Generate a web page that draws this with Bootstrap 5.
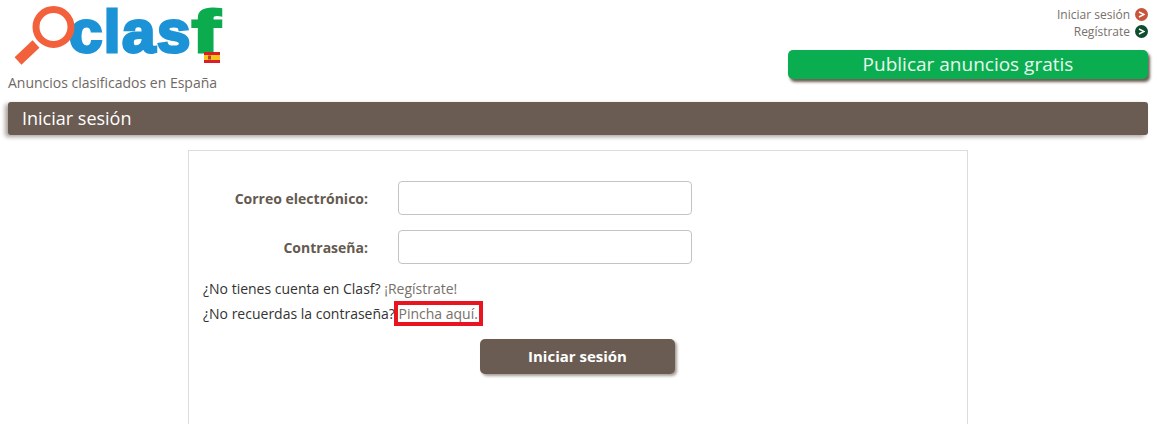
<!DOCTYPE html>
<html lang="es">
<head>
    <meta charset="UTF-8">
    <meta name="viewport" content="width=device-width, initial-scale=1.0">
    <title>Iniciar sesión</title>
    <link href="https://cdn.jsdelivr.net/npm/bootstrap@5.3.0/dist/css/bootstrap.min.css" rel="stylesheet">
    <style>
        body {
            font-family: "Open Sans", sans-serif;
            font-size: 14px;
            color: #333;
            background: #fff;
            overflow: hidden;
        }
        a { color: #77716a; text-decoration: none; }
        .site-head { height: 102px; padding: 0 10px 0 8px; }
        .logo-box { width: 216px; height: 72px; position: relative; }
        .logo-glass { position: absolute; left: 4px; top: 0; }
        .logo-word {
            position: absolute;
            left: 61px;
            top: 2px;
            font-family: "Liberation Sans", Arial, sans-serif;
            font-weight: 700;
            font-size: 60px;
            line-height: 60px;
            letter-spacing: 1.5px;
            color: #1c93d6;
            -webkit-text-stroke: 3px currentColor;
        }
        .logo-word span {
            display: inline-block;
            color: #0cab4e;
            transform: scaleX(1.4);
            transform-origin: left center;
        }
        .logo-flag { position: absolute; left: 196px; top: 52px; }
        .logo-tag { font-size: 14px; color: #6f6963; line-height: 20px; margin-top: 1px; }
        .top-links { font-size: 12px; line-height: 17px; padding-top: 6px; color: #77716a; }
        .top-row { height: 17px; }
        .arrow-dot {
            display: inline-flex;
            align-items: center;
            justify-content: center;
            width: 13px;
            height: 13px;
            border-radius: 50%;
            margin-left: 5px;
        }
        .dot-red { background: #c8553a; }
        .dot-dark { background: #0e4d2d; }
        .publish-btn {
            width: 360px;
            height: 29px;
            margin-top: 10px;
            background: #0aae50;
            color: #e8f7ee;
            border-radius: 5px;
            font-size: 19px;
            line-height: 28px;
            text-align: center;
            box-shadow: 2px 3px 3px #6b5d53;
        }
        .title-bar {
            margin: 0 10px 0 8px;
            height: 33px;
            background: #6a5c52;
            color: #fff;
            border-radius: 3px;
            font-size: 18px;
            line-height: 32px;
            padding-left: 14px;
            box-shadow: -3px 2px 4px #aaa39d;
        }
        .login-panel {
            width: 780px;
            height: 274px;
            margin: 15px 0 0 188px;
            border: 1px solid #ddd;
            border-bottom: 0;
            padding: 30px 14px 0;
        }
        .field-row { margin-bottom: 15px; height: 34px; }
        .field-label {
            width: 165px;
            font-weight: 700;
            color: #655a50;
            text-align: right;
            margin-right: 30px;
            font-size: 14px;
        }
        .field-input {
            width: 294px;
            height: 34px;
            border: 1px solid #c4c4c4;
            border-radius: 4px;
        }
        .help-line { line-height: 25px; color: #333; font-size: 14px; }
        .help-first { margin-top: -3px; }
        .marked {
            outline: 4px solid #e8141f;
            outline-offset: -1px;
            padding: 0 2px;
            margin-left: -2px;
        }
        .login-btn {
            width: 195px;
            height: 35px;
            margin: 13px 0 0 277px;
            background: #6a5c52;
            color: #fff;
            border: 0;
            border-radius: 5px;
            font-weight: 700;
            font-size: 15px;
            box-shadow: 2px 2px 3px #a59c95;
        }
    </style>
</head>
<body>
    <div class="site-head d-flex justify-content-between">
        <div>
            <div class="logo-box">
                <div class="logo-word">clas<span>f</span></div>
                <svg class="logo-glass" width="72" height="72" viewBox="0 0 72 72">
                    <circle cx="41.5" cy="27" r="17.5" fill="#fff" stroke="#f2603c" stroke-width="7"/>
                    <path d="M24 44 L6 61" stroke="#f2603c" stroke-width="10"/>
                </svg>
                <svg class="logo-flag" width="16" height="11" viewBox="0 0 16 11">
                    <rect width="16" height="11" fill="#d9202a"/>
                    <rect y="3" width="16" height="5" fill="#f6c31c"/>
                    <rect x="4" y="3.5" width="3" height="4" fill="#b8442a"/>
                </svg>
            </div>
            <div class="logo-tag">Anuncios clasificados en España</div>
        </div>
        <div class="d-flex flex-column align-items-end">
            <div class="top-links">
                <a class="top-row d-flex justify-content-end align-items-center" href="#">Iniciar sesión <span class="arrow-dot dot-red"><svg width="7" height="7" viewBox="0 0 7 7"><path d="M1 1 L6 3.5 L1 6" fill="none" stroke="#fff" stroke-width="1.4"/></svg></span></a>
                <a class="top-row d-flex justify-content-end align-items-center" href="#">Regístrate <span class="arrow-dot dot-dark"><svg width="7" height="7" viewBox="0 0 7 7"><path d="M1 1 L6 3.5 L1 6" fill="none" stroke="#fff" stroke-width="1.4"/></svg></span></a>
            </div>
            <div class="publish-btn">Publicar anuncios gratis</div>
        </div>
    </div>

    <div class="title-bar">Iniciar sesión</div>

    <div class="login-panel">
        <form>
            <div class="field-row d-flex align-items-center">
                <label class="field-label" for="email">Correo electrónico:</label>
                <input class="field-input" id="email" type="text">
            </div>
            <div class="field-row d-flex align-items-center">
                <label class="field-label" for="pass">Contraseña:</label>
                <input class="field-input" id="pass" type="password">
            </div>
            <div class="help-line help-first">¿No tienes cuenta en Clasf? <a href="#">¡Regístrate!</a></div>
            <div class="help-line">¿No recuerdas la contraseña? <a class="marked" href="#">Pincha aquí.</a></div>
            <button type="button" class="login-btn d-block">Iniciar sesión</button>
        </form>
    </div>
    <script src="https://cdn.jsdelivr.net/npm/bootstrap@5.3.0/dist/js/bootstrap.bundle.min.js"></script>
</body>
</html>
